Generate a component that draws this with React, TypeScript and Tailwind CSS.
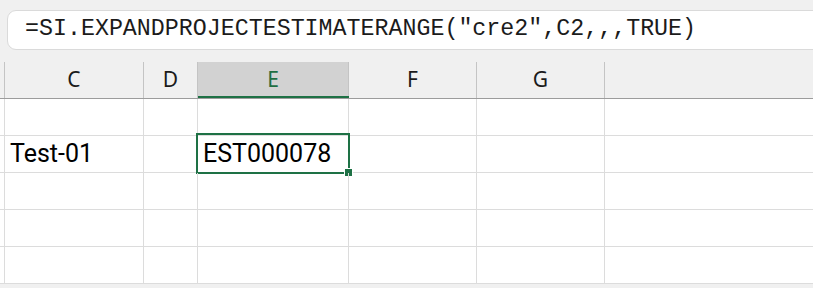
const columns = [
  { name: 'C', w: 'w-[139px]' },
  { name: 'D', w: 'w-[54px]' },
  { name: 'E', w: 'w-[151px]' },
  { name: 'F', w: 'w-[128px]' },
  { name: 'G', w: 'w-[128px]' },
];

const rows = [
  { c: '', e: '' },
  { c: 'Test-01', e: 'EST000078' },
  { c: '', e: '' },
  { c: '', e: '' },
  { c: '', e: '' },
];

const FormulaBar = () => (
  <div className="pt-[10px] pl-[7px]">
    <div className="h-[40px] -mr-[20px] flex items-center rounded-l-[9px] border border-[#dadada] bg-white pl-[17px]">
      <span className="font-['Liberation_Mono',monospace] text-[23.3px] leading-none text-[#1b1b1b] whitespace-nowrap">
        =SI.EXPANDPROJECTESTIMATERANGE("cre2",C2,,,TRUE)
      </span>
    </div>
  </div>
);

const HeaderRow = () => (
  <div className="mt-[12px] flex h-[37px] border-b border-[#9c9c9c] bg-[#f0f0f0]">
    <div className="w-[5px] shrink-0 border-r border-[#c4c4c4]" />
    {columns.map((col) => {
      const active = col.name === 'E';
      return (
        <div
          key={col.name}
          className={
            active
              ? `${col.w} shrink-0 relative flex items-center justify-center border-r border-[#c4c4c4] bg-[#d2d2d2] font-['Noto_Sans',sans-serif] text-[21px] text-[#1e6e42]`
              : `${col.w} shrink-0 flex items-center justify-center border-r border-[#c4c4c4] font-['Noto_Sans',sans-serif] text-[21px] text-[#1b1b1b]`
          }>
          {col.name}
          {active && <div className="absolute left-0 right-[-1px] bottom-0 h-[2px] bg-[#1e7145]" />}
        </div>
      );
    })}
    <div className="flex-1" />
  </div>
);

export default function App() {
  return (
    <div className="w-[813px] h-[288px] overflow-hidden bg-[#f0f0f0]">
      <FormulaBar />
      <HeaderRow />
      <div className="bg-white">
        {rows.map((row, i) => (
          <div key={i} className="flex h-[37px] border-b border-[#dcdcdc]">
            <div className="w-[5px] shrink-0 border-r border-[#dcdcdc]" />
            {columns.map((col) => {
              const selected = i === 1 && col.name === 'E';
              const value = col.name === 'C' ? row.c : col.name === 'E' ? row.e : '';
              return (
                <div
                  key={col.name}
                  className={`${col.w} shrink-0 relative flex items-center pl-[5px] border-r border-[#dcdcdc] font-['Roboto',sans-serif] text-[25px] text-black whitespace-nowrap`}>
                  {value}
                  {selected && (
                    <>
                      <div className="absolute left-[-2px] top-[-3px] right-[-2px] bottom-[-2px] border-2 border-[#1e7145]" />
                      <div className="absolute right-[-5px] bottom-[-5px] w-[9px] h-[9px] bg-[#1e7145] border border-white" />
                    </>
                  )}
                </div>
              );
            })}
            <div className="flex-1" />
          </div>
        ))}
      </div>
    </div>
  );
}
